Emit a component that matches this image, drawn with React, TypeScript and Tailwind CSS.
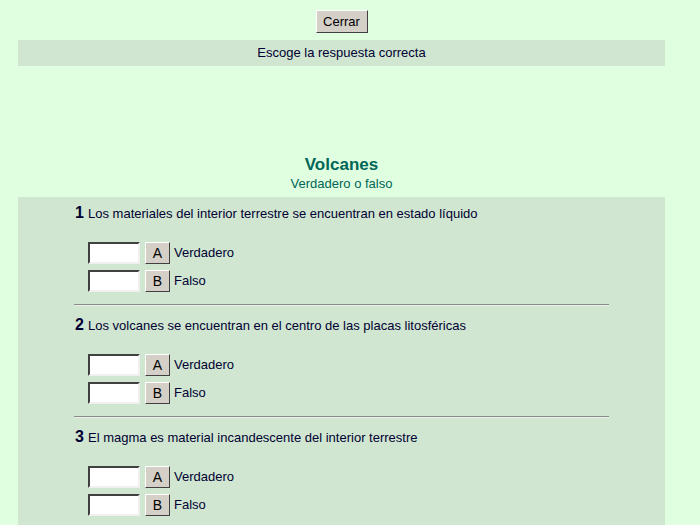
import React from "react";

const questions = [
  "Los materiales del interior terrestre se encuentran en estado líquido",
  "Los volcanes se encuentran en el centro de las placas litosféricas",
  "El magma es material incandescente del interior terrestre",
];

function Row({ letter, label }: { letter: string; label: string }) {
  return (
    <div className="flex items-center h-[22px]">
      <div className="w-[52px] h-[22px] bg-white border-2 border-t-[#404040] border-l-[#404040] border-b-[#f0f0f0] border-r-[#f0f0f0] box-border" />
      <div className="ml-[5px] w-[25px] h-[22px] bg-[#d4d0c8] border border-t-white border-l-white border-b-[#404040] border-r-[#404040] box-border flex items-center justify-center text-[14px] text-black leading-none">
        {letter}
      </div>
      <span className="ml-[4px] text-[13px] text-[#000033]">{label}</span>
    </div>
  );
}

export default function App() {
  return (
    <div
      className="w-[700px] h-[525px] overflow-hidden bg-[#e0ffe0]"
      style={{ fontFamily: '"Liberation Sans", Arial, sans-serif' }}
    >
      <div className="w-[683px]">
        <div className="flex justify-center pt-[10px]">
          <div className="w-[52px] h-[23px] bg-[#d4d0c8] border border-t-white border-l-white border-b-[#404040] border-r-[#404040] box-border flex items-center justify-center text-[13px] text-black">
            Cerrar
          </div>
        </div>
        <div className="mx-[18px] mt-[7px] h-[26px] bg-[#d0e6d0] flex items-center justify-center text-[13px] text-[#000033]">
          Escoge la respuesta correcta
        </div>
        <div className="mt-[90px] flex flex-col items-center text-[#006658]">
          <div className="text-[17px] font-bold leading-[18px]">Volcanes</div>
          <div className="text-[13px] leading-[14px] mt-[3px]">Verdadero o falso</div>
        </div>
        <div className="mx-[18px] mt-[6px] bg-[#d0e6d0] pt-[8px] pb-[20px]">
          <div className="w-[535px] mx-auto">
            {questions.map((q, i) => (
              <div key={i}>
                {i > 0 && (
                  <div className="mt-[12px] mb-[11px] h-[2px] border-t border-t-[#8a8a8a] border-b border-b-[#e8f0e8]" />
                )}
                <div className="flex items-baseline h-[16px] leading-[16px]">
                  <span className="text-[16px] font-bold text-[#000033] w-[14px] pl-[1px]">{i + 1}</span>
                  <span className="text-[13px] text-[#000033]">{q}</span>
                </div>
                <div className="mt-[21px] pl-[14px] flex flex-col gap-[6px]">
                  <Row letter="A" label="Verdadero" />
                  <Row letter="B" label="Falso" />
                </div>
              </div>
            ))}
          </div>
        </div>
      </div>
    </div>
  );
}
